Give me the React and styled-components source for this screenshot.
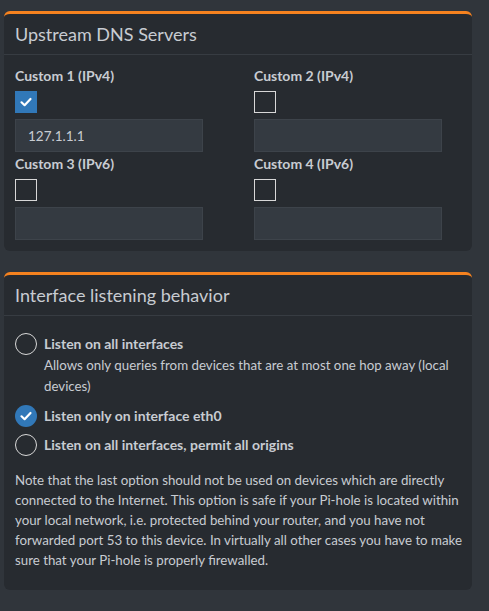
import React from 'react';
import styled, { createGlobalStyle } from 'styled-components';

const GlobalStyle = createGlobalStyle`
  html, body {
    margin: 0;
    background: #30353b;
  }
  body {
    font-family: 'Lato', 'Liberation Sans', sans-serif;
    font-size: 14px;
    color: #c8ccd2;
  }
`;

const Page = styled.div`
  padding: 11px 17px 0 4px;
  display: flex;
  flex-direction: column;
  gap: 21px;
`;

const Card = styled.section`
  background: #272b30;
  border-top: 3px solid #f5821f;
  border-radius: 6px;
`;

const CardHeader = styled.div`
  height: 40px;
  padding: 0 11px;
  display: flex;
  align-items: center;
  border-bottom: 1px solid #373c42;
`;

const Title = styled.h3`
  margin: 0;
  font-size: 18px;
  font-weight: 400;
  color: #c8ccd2;
`;

const CardBody = styled.div`
  padding: ${p => p.$pad || '12px 11px 11px'};
`;

const Grid = styled.div`
  display: grid;
  grid-template-columns: 239px 1fr;
  row-gap: 3px;
`;

const Field = styled.div`
  display: flex;
  flex-direction: column;
`;

const Label = styled.div`
  font-weight: 700;
  font-size: 14px;
  color: #c8ccd2;
  line-height: 18px;
  margin-bottom: 6px;
`;

const Box = styled.div`
  width: 22px;
  height: 22px;
  box-sizing: border-box;
  border: ${p => (p.$checked ? '1px solid #3178b8' : '1px solid #d8d8d8')};
  background: ${p => (p.$checked ? '#3178b8' : 'transparent')};
  display: flex;
  align-items: center;
  justify-content: center;
  margin-bottom: 6px;
`;

const Input = styled.div`
  width: 188px;
  height: 33px;
  box-sizing: border-box;
  background: #343a41;
  border: 1px solid #3d434a;
  padding: 0 12px;
  display: flex;
  align-items: center;
  font-size: 13.5px;
  color: #c8ccd2;
`;

const Option = styled.div`
  display: flex;
  gap: 7px;
  align-items: flex-start;
  margin-bottom: ${p => p.$gap || '7px'};
`;

const Radio = styled.div`
  width: 22px;
  height: 22px;
  flex: none;
  box-sizing: border-box;
  border-radius: 50%;
  border: ${p => (p.$checked ? 'none' : '1.5px solid #d8d8d8')};
  background: ${p => (p.$checked ? '#3178b8' : 'transparent')};
  display: flex;
  align-items: center;
  justify-content: center;
`;

const OptionText = styled.div`
  line-height: 21.5px;
  font-size: 13.3px;
`;

const OptionTitle = styled.div`
  font-weight: 700;
  font-size: 14px;
`;

const Note = styled.p`
  margin: 14px 0 0;
  line-height: 20.2px;
  font-size: 13.3px;
  white-space: nowrap;
`;

const Check = () => (
  <svg width="14" height="14" viewBox="0 0 14 14">
    <path d="M2.5 7.3 L5.6 10.2 L11.5 4" fill="none" stroke="#fff" strokeWidth="2.2" strokeLinecap="round" strokeLinejoin="round" />
  </svg>
);

const servers = [
  { label: 'Custom 1 (IPv4)', checked: true, value: '127.1.1.1' },
  { label: 'Custom 2 (IPv4)', checked: false, value: '' },
  { label: 'Custom 3 (IPv6)', checked: false, value: '' },
  { label: 'Custom 4 (IPv6)', checked: false, value: '' },
];

const noteLines = [
  'Note that the last option should not be used on devices which are directly',
  'connected to the Internet. This option is safe if your Pi-hole is located within',
  'your local network, i.e. protected behind your router, and you have not',
  'forwarded port 53 to this device. In virtually all other cases you have to make',
  'sure that your Pi-hole is properly firewalled.',
];

export default function App() {
  return (
    <>
      <GlobalStyle />
      <Page>
        <Card>
          <CardHeader>
            <Title>Upstream DNS Servers</Title>
          </CardHeader>
          <CardBody $pad="12px 11px 11px">
            <Grid>
              {servers.map(s => (
                <Field key={s.label}>
                  <Label>{s.label}</Label>
                  <Box $checked={s.checked}>{s.checked && <Check />}</Box>
                  <Input>{s.value}</Input>
                </Field>
              ))}
            </Grid>
          </CardBody>
        </Card>
        <Card>
          <CardHeader>
            <Title>Interface listening behavior</Title>
          </CardHeader>
          <CardBody $pad="17px 11px 19px">
            <Option>
              <Radio />
              <OptionText>
                <OptionTitle>Listen on all interfaces</OptionTitle>
                Allows only queries from devices that are at most one hop away (local devices)
              </OptionText>
            </Option>
            <Option>
              <Radio $checked><Check /></Radio>
              <OptionText>
                <OptionTitle>Listen only on interface eth0</OptionTitle>
              </OptionText>
            </Option>
            <Option $gap="0">
              <Radio />
              <OptionText>
                <OptionTitle>Listen on all interfaces, permit all origins</OptionTitle>
              </OptionText>
            </Option>
            <Note>
              {noteLines.map((line, i) => (
                <React.Fragment key={i}>
                  {line}
                  {i < noteLines.length - 1 && <br />}
                </React.Fragment>
              ))}
            </Note>
          </CardBody>
        </Card>
      </Page>
    </>
  );
}
